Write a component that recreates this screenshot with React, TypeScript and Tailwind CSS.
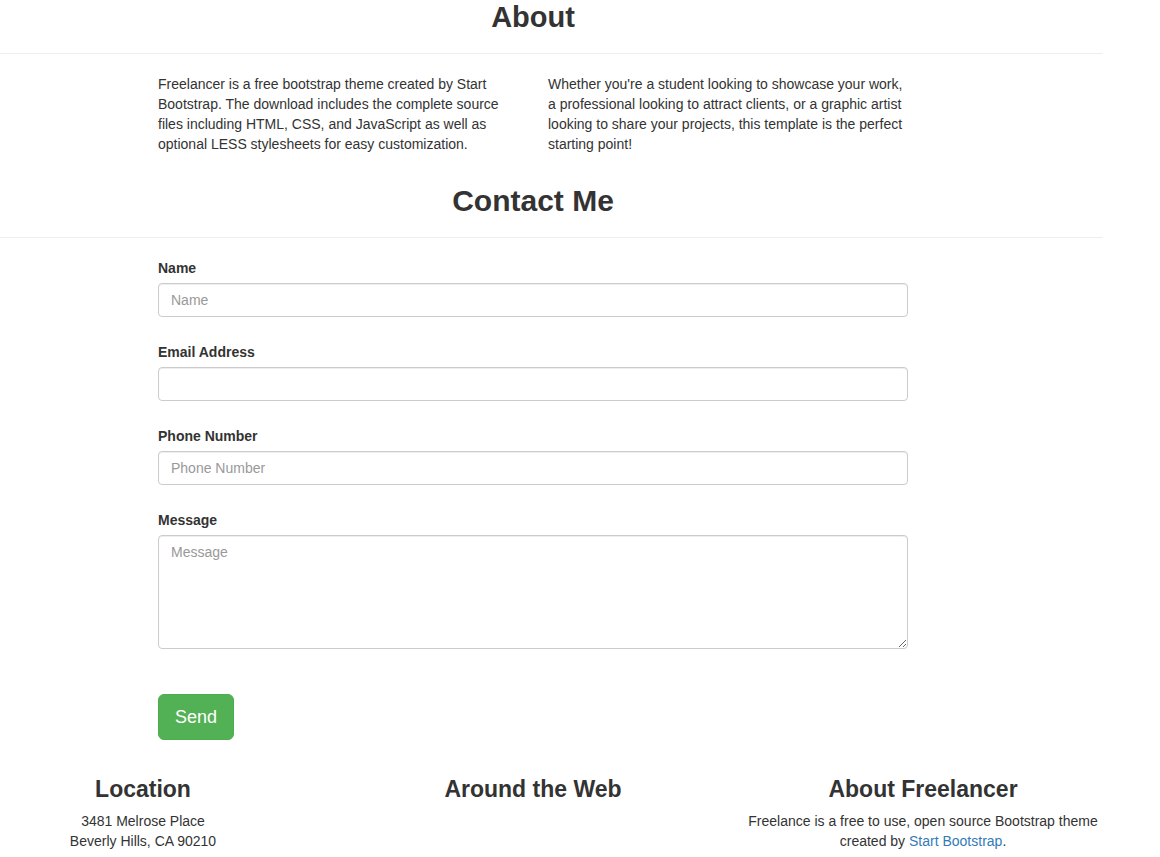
const font = "font-['Helvetica_Neue','Liberation_Sans',Arial,sans-serif]";

function Field({
  label,
  placeholder,
  textarea,
}: {
  label: string;
  placeholder?: string;
  textarea?: boolean;
}) {
  const box =
    "w-[750px] rounded-[4px] border border-[#ccc] bg-white px-3 text-[14px] text-[#555] shadow-[inset_0_1px_1px_rgba(0,0,0,0.075)] outline-none placeholder:text-[#999]";
  return (
    <div className="flex flex-col">
      <label className="h-[20px] text-[14px] font-bold leading-[20px] text-[#333]">{label}</label>
      <div className="mt-[5px]">
        {textarea ? (
          <textarea
            rows={5}
            placeholder={placeholder}
            className={`${box} block h-[114px] py-[6px] leading-[20px]`}
          />
        ) : (
          <input placeholder={placeholder} className={`${box} block h-[34px] py-[6px]`} />
        )}
      </div>
    </div>
  );
}

export default function App() {
  return (
    <div className={`${font} w-[1160px] overflow-hidden bg-white text-[14px] leading-[20px] text-[#333]`}>
      {/* About */}
      <section>
        <h2 className="w-[1066px] pt-[1px] text-center text-[29px] font-bold leading-[32px]">About</h2>
        <hr className="mt-[20px] w-[1103px] border-0 border-t border-[#eee]" />
        <div className="mt-[20px] flex gap-[30px] pl-[158px]">
          <p className="w-[360px]">
            Freelancer is a free bootstrap theme created by Start Bootstrap. The download includes the
            complete source files including HTML, CSS, and JavaScript as well as optional LESS
            stylesheets for easy customization.
          </p>
          <p className="w-[360px]">
            Whether you're a student looking to showcase your work, a professional looking to attract
            clients, or a graphic artist looking to share your projects, this template is the perfect
            starting point!
          </p>
        </div>
      </section>

      {/* Contact */}
      <section className="mt-[31px]">
        <h2 className="w-[1066px] text-center text-[30px] font-bold leading-[32px]">Contact Me</h2>
        <hr className="mt-[20px] w-[1103px] border-0 border-t border-[#eee]" />
        <form className="mt-[20px] flex flex-col gap-[25px] pl-[158px]" onSubmit={(e) => e.preventDefault()}>
          <Field label="Name" placeholder="Name" />
          <Field label="Email Address" />
          <Field label="Phone Number" placeholder="Phone Number" />
          <Field label="Message" placeholder="Message" textarea />
          <div className="mt-[20px]">
            <button
              type="submit"
              className="h-[46px] w-[76px] rounded-[6px] border border-[#4cae4c] bg-[#53b155] text-[18px] font-normal text-white"
            >
              Send
            </button>
          </div>
        </form>
      </section>

      {/* Footer */}
      <footer className="ml-[-52px] mt-[35px] grid w-[1170px] grid-cols-3 text-center">
        <div className="px-[15px]">
          <h3 className="text-[23px] font-bold leading-[28px]">Location</h3>
          <p className="mt-[8px]">
            3481 Melrose Place
            <br />
            Beverly Hills, CA 90210
          </p>
        </div>
        <div className="px-[15px]">
          <h3 className="text-[23px] font-bold leading-[28px]">Around the Web</h3>
        </div>
        <div className="px-[15px]">
          <h3 className="text-[23px] font-bold leading-[28px]">About Freelancer</h3>
          <p className="mt-[8px]">
            Freelance is a free to use, open source Bootstrap theme created by{" "}
            <a href="#" className="text-[#337ab7]">
              Start Bootstrap
            </a>
            .
          </p>
        </div>
      </footer>
    </div>
  );
}
